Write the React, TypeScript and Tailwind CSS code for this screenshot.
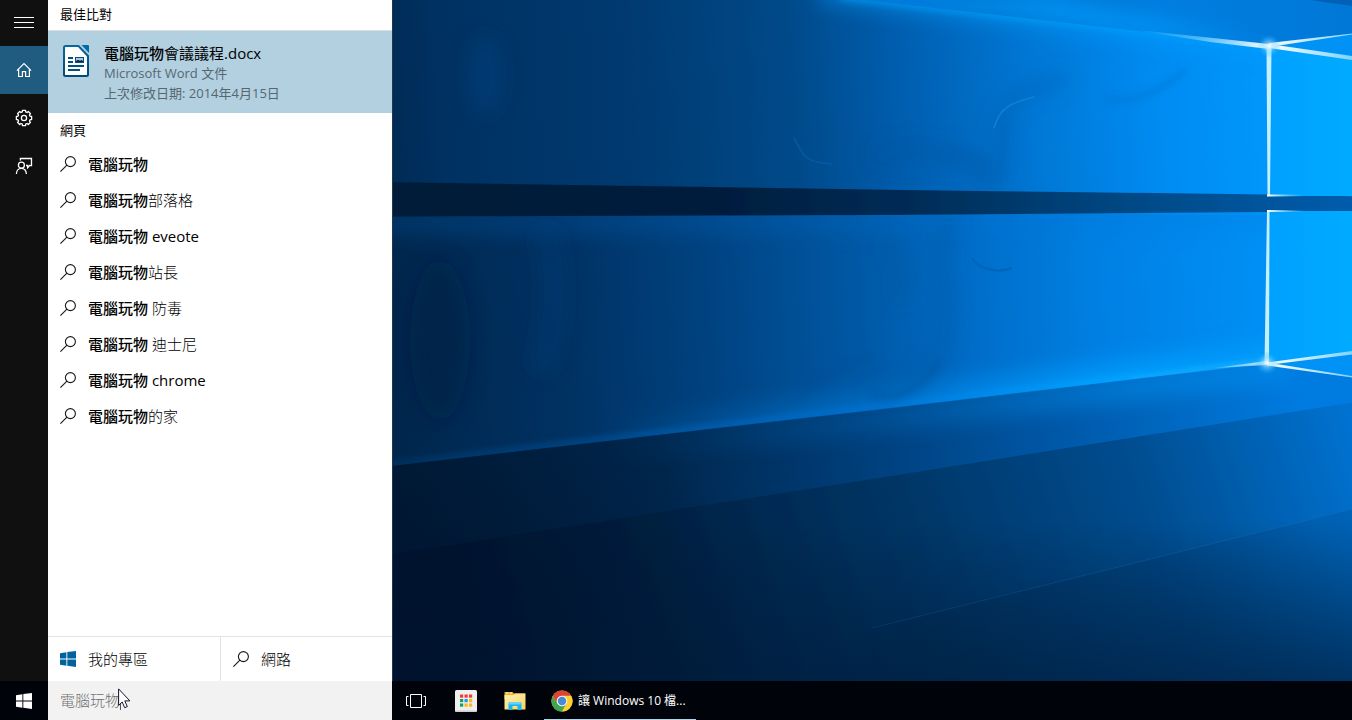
import type { ReactNode } from "react";

const suggestions = [
  { id: "base", rest: "", latin: false },
  { id: "blog", rest: "部落格", latin: false },
  { id: "eveote", rest: " eveote", latin: true },
  { id: "owner", rest: "站長", latin: false },
  { id: "antivirus", rest: " 防毒", latin: false },
  { id: "disney", rest: " 迪士尼", latin: false },
  { id: "chrome", rest: " chrome", latin: true },
  { id: "home", rest: "的家", latin: false },
];

function SearchIcon() {
  return (
    <svg className="size-4 shrink-0" viewBox="0 0 16 16" fill="none" stroke="#1a1a1a" strokeWidth="1.1" aria-hidden="true">
      <circle cx="10.4" cy="5.6" r="5" />
      <path d="M6.9 9.1 0.4 15.6" />
    </svg>
  );
}

function WindowsIcon({ color }: { color: string }) {
  return (
    <svg className="size-4 shrink-0" viewBox="0 0 16 16" fill={color} aria-hidden="true">
      <path d="M0 2.2 6.4 1.3V7.5H0zM7.3 1.1 16 0V7.5H7.3zM0 8.4H6.4V14.7L0 13.8zM7.3 8.4H16V16L7.3 14.8z" />
    </svg>
  );
}

function gearPath() {
  const teeth = 8;
  const parts: string[] = [];
  for (let i = 0; i < teeth; i++) {
    const center = (i * 2 * Math.PI) / teeth;
    const corners = [
      [6.3, -0.27],
      [7.8, -0.2],
      [7.8, 0.2],
      [6.3, 0.27],
    ];
    for (const [radius, offset] of corners) {
      const x = 9 + radius * Math.cos(center + offset);
      const y = 9 + radius * Math.sin(center + offset);
      parts.push(`${parts.length ? "L" : "M"}${x.toFixed(2)} ${y.toFixed(2)}`);
    }
  }
  return parts.join("") + "Z";
}

function RailButton({ label, active, children }: { label: string; active?: boolean; children: ReactNode }) {
  return (
    <button
      type="button"
      aria-label={label}
      className={active ? "flex h-12 w-full items-center justify-center bg-[#1f5c80]" : "flex h-12 w-full items-center justify-center"}
    >
      {children}
    </button>
  );
}

function Rail() {
  return (
    <nav className="w-12 shrink-0 bg-[#101010]">
      <button type="button" aria-label="選單" className="flex h-[46px] w-full items-center justify-center">
        <svg className="h-3 w-5" viewBox="0 0 20 12" stroke="#fff" strokeWidth="1" aria-hidden="true">
          <path d="M0 0.5H20M0 5.5H20M0 10.5H20" />
        </svg>
      </button>
      <RailButton label="首頁" active>
        <svg className="size-4" viewBox="0 0 16 16" fill="none" stroke="#fff" strokeWidth="1.2" aria-hidden="true">
          <path d="M0.9 8.7 8 1.6 15.1 8.7M2.6 7.3V14.5H6.4V9.6H9.6V14.5H13.4V7.3" />
        </svg>
      </RailButton>
      <RailButton label="設定">
        <svg className="size-[18px]" viewBox="0 0 18 18" fill="none" stroke="#fff" strokeWidth="1.3" strokeLinejoin="round" aria-hidden="true">
          <path d={gearPath()} />
          <circle cx="9" cy="9" r="2.6" />
        </svg>
      </RailButton>
      <RailButton label="意見反應">
        <svg className="size-[18px]" viewBox="0 0 18 18" fill="none" stroke="#fff" strokeWidth="1.3" aria-hidden="true">
          <circle cx="6.4" cy="8.2" r="3" />
          <path d="M1.4 17C1.4 9.500 11.4 9.500 11.4 17M5.4 3.500V1.500H16.5V8.500H14.6L12.6 10.800V8.500H11" />
        </svg>
      </RailButton>
    </nav>
  );
}

function WriterIcon() {
  return (
    <svg className="h-8 w-[26px] shrink-0" viewBox="0 0 26 32" aria-hidden="true">
      <defs>
        <linearGradient id="writer-edge" x1="0" y1="0" x2="0" y2="1">
          <stop offset="0" stopColor="#0369a3" />
          <stop offset="1" stopColor="#034a75" />
        </linearGradient>
      </defs>
      <path
        d="M2.5 1H15.5L25 11V29.5Q25 31 23.5 31H2.5Q1 31 1 29.5V2.5Q1 1 2.5 1Z"
        fill="#fff"
        stroke="url(#writer-edge)"
        strokeWidth="2"
      />
      <path d="M18.500 0H25Q26 0 26 1V8Z" fill="#0369a3" />
      <path d="M5 13H10M5 17H10M5 21H21M5 25H17" stroke="#035083" strokeWidth="2" />
      <rect x="12" y="12" width="9" height="6" fill="#035083" />
      <rect x="13" y="13" width="7" height="4" fill="#9fcdec" />
      <path d="M13 17V16L15 14.7 17 15.8 18.5 15 20 16V17Z" fill="#222" />
    </svg>
  );
}

function ResultsPanel() {
  return (
    <section className="flex w-[344px] shrink-0 flex-col bg-white text-black">
      <h2 className="flex h-[30px] items-center px-3 text-[13px]">最佳比對</h2>
      <a href="#document" className="flex h-[83px] gap-[15px] border-t border-[#d9dfe2] bg-[#b2d0e0] pt-3.5 pl-[15px]">
        <WriterIcon />
        <div className="-mt-0.5">
          <div className="text-[15px] leading-5">
            <span className="font-medium">電腦玩物</span>會議議程.docx
          </div>
          <div className="text-[13px] leading-5 text-[#566770]">Microsoft Word 文件</div>
          <div className="text-[13px] leading-5 text-[#566770]">上次修改日期: 2014年4月15日</div>
        </div>
      </a>
      <h2 className="flex h-[33px] items-center px-3 pt-0.5 text-[13px]">網頁</h2>
      <ul className="flex-1">
        {suggestions.map((item) => (
          <li key={item.id}>
            <a href={`#${item.id}`} className="flex h-9 items-center gap-3 px-3 text-[15px] whitespace-pre">
              <SearchIcon />
              <span>
                <span className="font-medium">電腦玩物</span>
                <span className={item.latin ? "font-normal" : "font-light"}>{item.rest}</span>
              </span>
            </a>
          </li>
        ))}
      </ul>
      <div className="grid h-[45px] grid-cols-2 border-t border-[#e3e3e3] text-[15px] font-light">
        <button type="button" className="flex items-center gap-3 px-3">
          <WindowsIcon color="#00639c" />
          我的專區
        </button>
        <button type="button" className="flex items-center gap-3 border-l border-[#e3e3e3] px-3">
          <SearchIcon />
          網路
        </button>
      </div>
    </section>
  );
}

function Wallpaper() {
  return (
    <svg className="h-full w-full" viewBox="392 0 960 681" preserveAspectRatio="xMaxYMid slice" aria-hidden="true">
      <defs>
        <linearGradient id="upper" gradientUnits="userSpaceOnUse" x1="392" y1="120" x2="1352" y2="60">
          <stop offset="0" stopColor="#002b55" />
          <stop offset="0.05" stopColor="#003162" />
          <stop offset="0.25" stopColor="#003a70" />
          <stop offset="0.42" stopColor="#004a8a" />
          <stop offset="0.52" stopColor="#005cac" />
          <stop offset="0.67" stopColor="#0078d6" />
          <stop offset="0.8" stopColor="#008cf2" />
          <stop offset="0.92" stopColor="#0098fc" />
        </linearGradient>
        <linearGradient id="lower" gradientUnits="userSpaceOnUse" x1="392" y1="340" x2="1268" y2="290">
          <stop offset="0" stopColor="#00264c" />
          <stop offset="0.2" stopColor="#003263" />
          <stop offset="0.36" stopColor="#004280" />
          <stop offset="0.54" stopColor="#0059a6" />
          <stop offset="0.66" stopColor="#006dc8" />
          <stop offset="0.8" stopColor="#007fe2" />
          <stop offset="1" stopColor="#0090f6" />
        </linearGradient>
        <linearGradient id="beam" gradientUnits="userSpaceOnUse" x1="392" y1="0" x2="1352" y2="0">
          <stop offset="0" stopColor="#001a37" />
          <stop offset="0.35" stopColor="#001e3e" />
          <stop offset="0.55" stopColor="#002d58" />
          <stop offset="0.8" stopColor="#004c8b" />
          <stop offset="1" stopColor="#005cab" />
        </linearGradient>
        <linearGradient id="floor" gradientUnits="userSpaceOnUse" x1="392" y1="500" x2="1300" y2="400">
          <stop offset="0" stopColor="#001c39" />
          <stop offset="0.3" stopColor="#00274e" />
          <stop offset="0.52" stopColor="#003f7b" />
          <stop offset="0.75" stopColor="#005aab" />
          <stop offset="1" stopColor="#007be0" />
        </linearGradient>
        <linearGradient id="floor2" gradientUnits="userSpaceOnUse" x1="480" y1="710" x2="1352" y2="410">
          <stop offset="0" stopColor="#001630" />
          <stop offset="0.25" stopColor="#002143" />
          <stop offset="0.5" stopColor="#003565" />
          <stop offset="0.75" stopColor="#004c8e" />
          <stop offset="1" stopColor="#0073d2" />
        </linearGradient>
        <linearGradient id="floor3" gradientUnits="userSpaceOnUse" x1="1120" y1="690" x2="1290" y2="500">
          <stop offset="0" stopColor="#00274c" stopOpacity="0.5" />
          <stop offset="0.5" stopColor="#003b72" stopOpacity="0.8" />
          <stop offset="1" stopColor="#0058a4" />
        </linearGradient>
        <linearGradient id="sky" gradientUnits="userSpaceOnUse" x1="870" y1="0" x2="1352" y2="0">
          <stop offset="0" stopColor="#0078db" />
          <stop offset="0.25" stopColor="#006bc6" />
          <stop offset="0.6" stopColor="#007ee0" />
          <stop offset="1" stopColor="#0078d8" />
        </linearGradient>
        <linearGradient id="edge" gradientUnits="userSpaceOnUse" x1="392" y1="0" x2="1268" y2="0">
          <stop offset="0" stopColor="#0065b5" stopOpacity="0.2" />
          <stop offset="0.5" stopColor="#0071d8" stopOpacity="0.7" />
          <stop offset="0.8" stopColor="#00a4ff" />
          <stop offset="1" stopColor="#20b4ff" />
        </linearGradient>
        <linearGradient id="wash" gradientUnits="userSpaceOnUse" x1="600" y1="0" x2="1268" y2="0">
          <stop offset="0" stopColor="#0090f5" stopOpacity="0" />
          <stop offset="0.4" stopColor="#0090f5" stopOpacity="0.35" />
          <stop offset="0.8" stopColor="#00a0ff" stopOpacity="0.8" />
          <stop offset="1" stopColor="#00a0ff" stopOpacity="0.7" />
        </linearGradient>
        <linearGradient id="ray" gradientUnits="userSpaceOnUse" x1="1130" y1="0" x2="1268" y2="0">
          <stop offset="0" stopColor="#5cc8ff" stopOpacity="0" />
          <stop offset="0.5" stopColor="#6ccaff" stopOpacity="0.7" />
          <stop offset="1" stopColor="#fff" />
        </linearGradient>
        <linearGradient id="pane" x1="0" y1="0" x2="1" y2="0">
          <stop offset="0" stopColor="#00a0ff" />
          <stop offset="1" stopColor="#00abff" />
        </linearGradient>
        <linearGradient id="stub" gradientUnits="userSpaceOnUse" x1="1268" y1="0" x2="1305" y2="0">
          <stop offset="0" stopColor="#fff" />
          <stop offset="1" stopColor="#6fd2ff" stopOpacity="0" />
        </linearGradient>
        <linearGradient id="tip" gradientUnits="userSpaceOnUse" x1="1268" y1="0" x2="1352" y2="0">
          <stop offset="0" stopColor="#fff" />
          <stop offset="1" stopColor="#7fd4ff" />
        </linearGradient>
        <radialGradient id="flare">
          <stop offset="0" stopColor="#fff" />
          <stop offset="0.3" stopColor="#a8e4ff" stopOpacity="0.6" />
          <stop offset="1" stopColor="#00a8ff" stopOpacity="0" />
        </radialGradient>
        <radialGradient id="dusk" gradientUnits="userSpaceOnUse" cx="392" cy="700" r="380">
          <stop offset="0" stopColor="#000b22" stopOpacity="0.55" />
          <stop offset="1" stopColor="#000b22" stopOpacity="0" />
        </radialGradient>
        <linearGradient id="dusk2" gradientUnits="userSpaceOnUse" x1="0" y1="520" x2="0" y2="700">
          <stop offset="0" stopColor="#001d3d" stopOpacity="0" />
          <stop offset="1" stopColor="#001d3d" stopOpacity="0.7" />
        </linearGradient>
        <filter id="soft1" filterUnits="userSpaceOnUse" x="340" y="-60" width="1080" height="800">
          <feGaussianBlur stdDeviation="0.7" />
        </filter>
        <filter id="soft3" filterUnits="userSpaceOnUse" x="340" y="-60" width="1080" height="800">
          <feGaussianBlur stdDeviation="3" />
        </filter>
        <filter id="soft10" filterUnits="userSpaceOnUse" x="340" y="-60" width="1080" height="800">
          <feGaussianBlur stdDeviation="10" />
        </filter>
        <clipPath id="sky-clip"><path d="M866 0H1352V58L1269 46Z" /></clipPath>
        <clipPath id="upper-clip"><path d="M392 0H866L1269 46V194L872 189 392 182Z" /></clipPath>
        <clipPath id="lower-clip"><path d="M392 216 872 215 1268 212V363L872 410 392 466Z" /></clipPath>
        <clipPath id="floor-clip"><path d="M392 466 872 410 1267 364 1352 377V681H392Z" /></clipPath>
      </defs>

      <rect x="392" width="960" height="681" fill="url(#upper)" />

      {/* sky above the window frame */}
      <path d="M866 0H1352V60L1269 46Z" fill="url(#sky)" />
      <g clipPath="url(#sky-clip)">
        <path d="M1050 -6 1269 44 1130 34 860 0Z" fill="#009cfb" opacity="0.7" filter="url(#soft10)" />
        <path d="M1310 0H1352V6Z" fill="#0061b6" />
      </g>

      {/* upper pane */}
      <g clipPath="url(#upper-clip)">
        <path d="M820 -10 1290 46" stroke="#00a0ff" strokeWidth="26" opacity="0.45" filter="url(#soft10)" />
        <path d="M840 -3 1269 46" stroke="#00a4ff" strokeWidth="5" opacity="0.7" filter="url(#soft3)" />
        <g fill="none" filter="url(#soft10)">
          <ellipse cx="485" cy="75" rx="16" ry="40" fill="#004a8c" opacity="0.35" />
          <path d="M1065 75C1050 90 1035 82 1018 95 1000 108 996 128 1000 180" stroke="#005cac" strokeWidth="12" opacity="0.5" />
          <path d="M880 160C900 143 930 155 960 157 985 160 980 180 990 190" stroke="#00529c" strokeWidth="16" opacity="0.45" />
        </g>
        <g fill="none" filter="url(#soft3)">
          <path d="M1105 98C1130 105 1160 92 1185 70" stroke="#0074ce" strokeWidth="5" opacity="0.5" />
          <path d="M1006 125C1004 150 999 160 998 185" stroke="#0064ba" strokeWidth="4" opacity="0.6" />
          <path d="M880 158C900 142 920 142 945 153 965 158 980 150 985 165" stroke="#0060b4" strokeWidth="3" opacity="0.5" />
        </g>
        <path d="M994 128C1000 105 1015 102 1034 97" fill="none" stroke="#2f9df0" strokeWidth="1.500" opacity="0.4" filter="url(#soft1)" />
        <path d="M794 138C804 155 802 162 832 164" fill="none" stroke="#0a62b0" strokeWidth="2" opacity="0.5" filter="url(#soft1)" />
      </g>

      {/* lower pane */}
      <path d="M392 215H1268V366L872 412 392 467Z" fill="url(#lower)" />
      <g clipPath="url(#lower-clip)">
        <path d="M360 222 872 220 1300 218" fill="none" stroke="#0078d8" strokeWidth="26" opacity="0.2" filter="url(#soft10)" />
        <path d="M560 446 872 408 1290 360" fill="none" stroke="url(#wash)" strokeWidth="36" filter="url(#soft10)" />
        <path d="M380 466 872 408 1290 360" fill="none" stroke="url(#edge)" strokeWidth="6" filter="url(#soft3)" />
        <g fill="none" filter="url(#soft10)">
          <path d="M955 215C925 250 955 290 944 330 940 370 915 385 870 400" stroke="#00529c" strokeWidth="14" opacity="0.4" />
          <path d="M545 230C560 280 555 330 540 370" stroke="#004482" strokeWidth="20" opacity="0.35" />
          <ellipse cx="440" cy="340" rx="30" ry="80" fill="#001e40" opacity="0.35" />
          <path d="M890 240C900 260 912 275 900 300" stroke="#00529a" strokeWidth="14" opacity="0.4" />
        </g>
        <path d="M972 258C980 272 1002 272 1012 268" fill="none" stroke="#0064b8" strokeWidth="2.500" opacity="0.8" filter="url(#soft1)" />
        <g fill="none" stroke="#004f96" strokeWidth="4" opacity="0.45" filter="url(#soft3)">
          <path d="M800 398C815 378 850 362 870 356" />
          <path d="M870 392C900 404 925 385 940 362" />
        </g>
      </g>

      {/* dark beam between the panes */}
      <path d="M380 182 872 189.500 1268 194.500 1362 196.500V211L1268 212 872 215 380 216.500Z" fill="url(#beam)" filter="url(#soft1)" />

      {/* bright panes on the right */}
      <path d="M1269 46 1352 58V196H1269Z" fill="url(#pane)" />
      <path d="M1268 211H1352V354L1267 364Z" fill="url(#pane)" />
      <path d="M1269 45 1352 34V58Z" fill="#0092f4" />
      <path d="M1267 364 1352 353V377Z" fill="#0092f4" />

      {/* floor */}
      <path d="M392 466 872 410.500 1267 364 1352 376V681H392Z" fill="url(#floor)" />
      <g clipPath="url(#floor-clip)">
        <path d="M600 452 872 420 1290 368" fill="none" stroke="url(#wash)" strokeWidth="26" opacity="0.5" filter="url(#soft10)" />
        <path d="M380 556 872 479 1362 401V700H380Z" fill="url(#floor2)" filter="url(#soft1)" />
        <path d="M872 628 1352 509V681H872Z" fill="url(#floor3)" opacity="0.5" />
        <path d="M872 628 1352 509" stroke="#1276c9" strokeWidth="1" opacity="0.35" />
        <path d="M392 480H1352V681H392Z" fill="url(#dusk2)" />
        <path d="M392 400H900V681H392Z" fill="url(#dusk)" />
      </g>

      {/* glowing window frame */}
      <path d="M1130 29 1269 44V49L1210 42Z" fill="url(#ray)" filter="url(#soft1)" />
      <path d="M1215 368 1266 361V365Z" fill="url(#ray)" opacity="0.7" filter="url(#soft1)" />
      <g fill="none" filter="url(#soft1)">
        <path d="M1266.500 46H1271.500L1270 195H1267.500Z" fill="#c6efff" />
        <path d="M1267 211H1269.500L1269 364H1264.500Z" fill="#c6efff" />
        <path d="M1267 195.500H1305M1267 211H1305" stroke="url(#stub)" strokeWidth="2" />
        <path d="M1269 43 1352 33.500V34.500L1269 47Z" fill="url(#tip)" />
        <path d="M1269 44 1352 56V60L1269 48Z" fill="url(#tip)" />
        <path d="M1267 362.500 1352 351V354.500L1267 365Z" fill="url(#tip)" />
        <path d="M1267 362.500 1352 376V377.500L1267 365.500Z" fill="url(#tip)" />
      </g>
      <circle cx="1269" cy="46" r="12" fill="url(#flare)" />
      <circle cx="1267" cy="363" r="12" fill="url(#flare)" />
      <path d="M392.500 0V681" stroke="#1d3950" strokeWidth="1" />
    </svg>
  );
}

function TaskViewIcon() {
  return (
    <svg className="h-4 w-5" viewBox="0 0 20 16" fill="none" stroke="#fff" strokeWidth="1" aria-hidden="true">
      <path d="M4.500 1.500H15.500V14.500H4.500ZM2.500 3.500H0.500V12.500H2.500M17.500 3.500H19.500V12.500H17.500" />
    </svg>
  );
}

function AppsIcon() {
  const colors = ["#f23b36", "#f23b36", "#f23b36", "#10a45c", "#2196f3", "#fcb816", "#10a45c", "#fcb816", "#fcb816"];
  return (
    <svg className="size-[22px]" viewBox="0 0 22 22" aria-hidden="true">
      <rect width="22" height="22" rx="1.500" fill="#efefef" />
      <path d="M0.500 20.500V21.200Q0.500 22 1.500 22H20.500Q21.500 22 21.500 21.200V20.500Z" fill="#cfcfcf" />
      {colors.map((color, i) => (
        <rect key={i} x={5 + (i % 3) * 4.5} y={4.5 + Math.floor(i / 3) * 4.5} width="3.200" height="3.200" fill={color} />
      ))}
    </svg>
  );
}

function FolderIcon() {
  return (
    <svg className="h-5 w-[22px]" viewBox="0 0 22 20" aria-hidden="true">
      <defs>
        <linearGradient id="folder" x1="0" y1="0" x2="1" y2="1">
          <stop offset="0" stopColor="#fff0b0" />
          <stop offset="1" stopColor="#f8d468" />
        </linearGradient>
      </defs>
      <path d="M0.500 1.500Q0.500 1 1 1H8.500L10 2.500H21V8H0.500Z" fill="#e9b52f" />
      <path d="M2 2H4.500M6 2H8" stroke="#fff5cf" strokeWidth="1" />
      <path d="M0.500 4H9.500L11 2.500H21.500V18.500H0.500Z" fill="url(#folder)" />
      <path d="M4.500 19V12.500Q4.500 11 6 11H16Q17.500 11 17.500 12.500V19H13.500V15H8.500V19Z" fill="#19b5f1" />
      <path d="M5.500 11H16.500L17.500 13.500H4.500Z" fill="#64d2fa" />
    </svg>
  );
}

function ChromeIcon() {
  return (
    <svg className="size-[22px]" viewBox="0 0 48 48" aria-hidden="true">
      <circle cx="24" cy="24" r="23" fill="#fdd034" />
      <path d="M4.080 12.500A23 23 0 0 0 24 47L33.960 29.750 24 24 14.040 29.750Z" fill="#3fa652" />
      <path d="M24 47A23 23 0 0 0 43.920 12.500H24V24L33.960 29.750Z" fill="#fdd034" />
      <path d="M4.080 12.500A23 23 0 0 1 43.920 12.500H24A11.500 11.500 0 0 0 14.040 29.750Z" fill="#dc4437" />
      <circle cx="24" cy="24" r="11.500" fill="#f4f4f4" />
      <circle cx="24" cy="24" r="9.200" fill="#4a8ad4" />
    </svg>
  );
}

function Taskbar() {
  return (
    <footer className="flex h-[39px] shrink-0 bg-[#000309] text-white">
      <button type="button" aria-label="開始" className="flex w-12 shrink-0 items-center justify-center">
        <WindowsIcon color="#fff" />
      </button>
      <div className="relative w-[344px] shrink-0">
        <input
          type="text"
          aria-label="搜尋"
          defaultValue="電腦玩物"
          className="h-full w-full bg-[#f2f2f2] px-3 pb-0.5 text-[15px] font-light text-[#6f6f6f] outline-none"
        />
        <svg className="pointer-events-none absolute top-[7px] left-[70px] h-[22px] w-[13px]" viewBox="0 0 13 22" aria-hidden="true">
          <path d="M2.500 12V22" stroke="#555" strokeWidth="1" />
          <path d="M0.600 0.900V17.400L4.200 14 6.700 19.700 9.300 18.600 6.800 12.900H11.900Z" fill="#fff" stroke="#14142a" strokeWidth="1" />
        </svg>
      </div>
      <button type="button" aria-label="工作檢視" className="flex w-12 items-center justify-center">
        <TaskViewIcon />
      </button>
      <button type="button" aria-label="應用程式啟動器" className="flex w-[52px] items-center justify-center">
        <AppsIcon />
      </button>
      <button type="button" aria-label="檔案總管" className="flex w-[46px] items-center justify-center">
        <FolderIcon />
      </button>
      <button type="button" className="ml-1.5 flex w-[152px] items-center gap-[5px] border-b border-[#a5d8ef] pt-px pl-[7px] text-[12px]">
        <ChromeIcon />
        <span className="whitespace-nowrap">讓 Windows 10 檔...</span>
      </button>
    </footer>
  );
}

export default function App() {
  return (
    <div lang="zh-Hant" className="flex h-screen flex-col overflow-hidden bg-black font-['Open_Sans','Noto_Sans_CJK_TC',sans-serif]">
      <main className="flex min-h-0 flex-1">
        <Rail />
        <ResultsPanel />
        <div className="min-w-0 flex-1 overflow-hidden">
          <Wallpaper />
        </div>
      </main>
      <Taskbar />
    </div>
  );
}
